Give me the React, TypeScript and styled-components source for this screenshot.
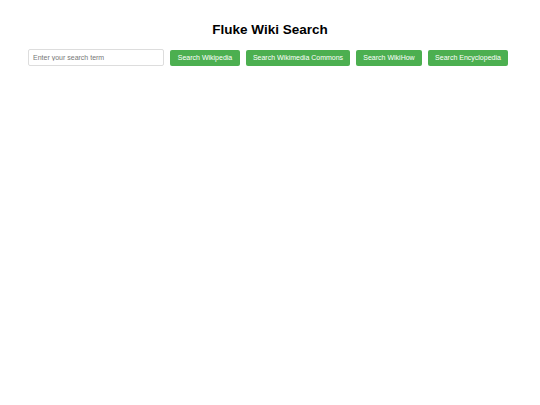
import styled, { createGlobalStyle } from 'styled-components';

const GlobalStyle = createGlobalStyle`
  html, body {
    margin: 0;
    padding: 0;
    background: #ffffff;
    font-family: "Liberation Sans", Arial, sans-serif;
  }
`;

const Page = styled.div`
  padding-top: 21px;
  display: flex;
  flex-direction: column;
  align-items: center;
`;

const Title = styled.h1`
  margin: 0;
  font-size: 13.5px;
  font-weight: 700;
  color: #000;
  line-height: 17px;
  padding-left: 0;
`;

const SearchRow = styled.div`
  margin-top: 11px;
  padding-right: 4px;
  display: flex;
  align-items: center;
  gap: 6px;
`;

const SearchInput = styled.input`
  box-sizing: border-box;
  width: 136px;
  height: 17px;
  padding: 0 4px;
  border: 1px solid #ddd;
  border-radius: 2px;
  font-family: inherit;
  font-size: 7px;
  color: #333;
  outline: none;

  &::placeholder {
    color: #777;
  }
`;

const SearchButton = styled.button<{ $width: number }>`
  box-sizing: border-box;
  width: ${(p) => p.$width}px;
  height: 16px;
  padding: 0;
  border: none;
  border-radius: 2px;
  background: #4caf50;
  color: #fff;
  font-family: inherit;
  font-size: 7px;
  cursor: pointer;
`;

const sources = [
  { label: 'Search Wikipedia', width: 70 },
  { label: 'Search Wikimedia Commons', width: 104 },
  { label: 'Search WikiHow', width: 66 },
  { label: 'Search Encyclopedia', width: 80 },
];

export default function App() {
  return (
    <>
      <GlobalStyle />
      <Page>
        <Title>Fluke Wiki Search</Title>
        <SearchRow>
          <SearchInput placeholder="Enter your search term" />
          {sources.map((s) => (
            <SearchButton key={s.label} $width={s.width}>
              {s.label}
            </SearchButton>
          ))}
        </SearchRow>
      </Page>
    </>
  );
}
